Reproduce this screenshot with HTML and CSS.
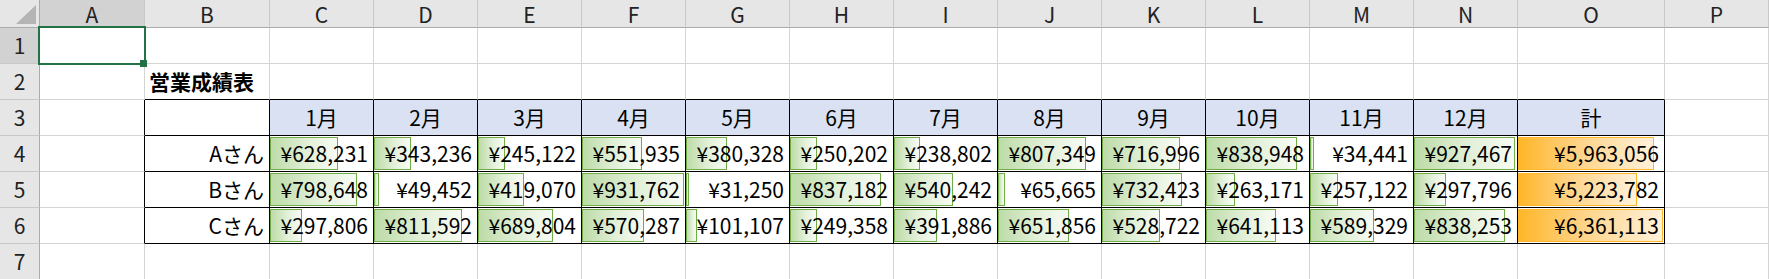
FILE: index.html
```html
<!DOCTYPE html>
<html lang="ja">
<head>
<meta charset="utf-8">
<title>営業成績表</title>
<link rel="stylesheet" href="styles.css">
</head>
<body>
<div class="sheet">
  <!-- column headers -->
  <div class="corner"><span class="tri"></span></div>
  <div class="ch sel">A</div><div class="ch">B</div><div class="ch">C</div><div class="ch">D</div><div class="ch">E</div><div class="ch">F</div><div class="ch">G</div><div class="ch">H</div><div class="ch">I</div><div class="ch">J</div><div class="ch">K</div><div class="ch">L</div><div class="ch">M</div><div class="ch">N</div><div class="ch">O</div><div class="ch">P</div>

  <!-- row 1 -->
  <div class="rh sel">1</div>
  <div class="c"></div><div class="c"></div><div class="c"></div><div class="c"></div><div class="c"></div><div class="c"></div><div class="c"></div><div class="c"></div><div class="c"></div><div class="c"></div><div class="c"></div><div class="c"></div><div class="c"></div><div class="c"></div><div class="c"></div><div class="c"></div>

  <!-- row 2 -->
  <div class="rh">2</div>
  <div class="c"></div>
  <div class="c bb title">営業成績表</div>
  <div class="c bb"></div><div class="c bb"></div><div class="c bb"></div><div class="c bb"></div><div class="c bb"></div><div class="c bb"></div><div class="c bb"></div><div class="c bb"></div><div class="c bb"></div><div class="c bb"></div><div class="c bb"></div><div class="c bb"></div><div class="c bb"></div>
  <div class="c"></div>

  <!-- row 3 -->
  <div class="rh">3</div>
  <div class="c br"></div>
  <div class="c t"></div>
  <div class="c t hd">1月</div><div class="c t hd">2月</div><div class="c t hd">3月</div><div class="c t hd">4月</div><div class="c t hd">5月</div><div class="c t hd">6月</div><div class="c t hd">7月</div><div class="c t hd">8月</div><div class="c t hd">9月</div><div class="c t hd">10月</div><div class="c t hd">11月</div><div class="c t hd">12月</div>
  <div class="c t hd">計</div>
  <div class="c"></div>

  <!-- row 4 -->
  <div class="rh">4</div>
  <div class="c br"></div>
  <div class="c t lbl">Aさん</div>
  <div class="c t num"><span class="bar g" style="width:68.4px"></span><span class="v">¥628,231</span></div>
  <div class="c t num"><span class="bar g" style="width:37.4px"></span><span class="v">¥343,236</span></div>
  <div class="c t num"><span class="bar g" style="width:26.7px"></span><span class="v">¥245,122</span></div>
  <div class="c t num"><span class="bar g" style="width:60.1px"></span><span class="v">¥551,935</span></div>
  <div class="c t num"><span class="bar g" style="width:41.4px"></span><span class="v">¥380,328</span></div>
  <div class="c t num"><span class="bar g" style="width:27.3px"></span><span class="v">¥250,202</span></div>
  <div class="c t num"><span class="bar g" style="width:26.0px"></span><span class="v">¥238,802</span></div>
  <div class="c t num"><span class="bar g" style="width:87.9px"></span><span class="v">¥807,349</span></div>
  <div class="c t num"><span class="bar g" style="width:78.1px"></span><span class="v">¥716,996</span></div>
  <div class="c t num"><span class="bar g" style="width:91.4px"></span><span class="v">¥838,948</span></div>
  <div class="c t num"><span class="bar g" style="width:3.8px"></span><span class="v">¥34,441</span></div>
  <div class="c t num"><span class="bar g" style="width:101.0px"></span><span class="v">¥927,467</span></div>
  <div class="c t num"><span class="bar o" style="width:135.9px"></span><span class="v">¥5,963,056</span></div>
  <div class="c"></div>

  <!-- row 5 -->
  <div class="rh">5</div>
  <div class="c br"></div>
  <div class="c t lbl">Bさん</div>
  <div class="c t num"><span class="bar g" style="width:87.0px"></span><span class="v">¥798,648</span></div>
  <div class="c t num"><span class="bar g" style="width:5.4px"></span><span class="v">¥49,452</span></div>
  <div class="c t num"><span class="bar g" style="width:45.7px"></span><span class="v">¥419,070</span></div>
  <div class="c t num"><span class="bar g" style="width:101.5px"></span><span class="v">¥931,762</span></div>
  <div class="c t num"><span class="bar g" style="width:3.4px"></span><span class="v">¥31,250</span></div>
  <div class="c t num"><span class="bar g" style="width:91.2px"></span><span class="v">¥837,182</span></div>
  <div class="c t num"><span class="bar g" style="width:58.9px"></span><span class="v">¥540,242</span></div>
  <div class="c t num"><span class="bar g" style="width:7.2px"></span><span class="v">¥65,665</span></div>
  <div class="c t num"><span class="bar g" style="width:79.8px"></span><span class="v">¥732,423</span></div>
  <div class="c t num"><span class="bar g" style="width:28.7px"></span><span class="v">¥263,171</span></div>
  <div class="c t num"><span class="bar g" style="width:28.0px"></span><span class="v">¥257,122</span></div>
  <div class="c t num"><span class="bar g" style="width:32.4px"></span><span class="v">¥297,796</span></div>
  <div class="c t num"><span class="bar o" style="width:119.1px"></span><span class="v">¥5,223,782</span></div>
  <div class="c"></div>

  <!-- row 6 -->
  <div class="rh">6</div>
  <div class="c br"></div>
  <div class="c t lbl">Cさん</div>
  <div class="c t num"><span class="bar g" style="width:32.4px"></span><span class="v">¥297,806</span></div>
  <div class="c t num"><span class="bar g" style="width:88.4px"></span><span class="v">¥811,592</span></div>
  <div class="c t num"><span class="bar g" style="width:75.1px"></span><span class="v">¥689,804</span></div>
  <div class="c t num"><span class="bar g" style="width:62.1px"></span><span class="v">¥570,287</span></div>
  <div class="c t num"><span class="bar g" style="width:11.0px"></span><span class="v">¥101,107</span></div>
  <div class="c t num"><span class="bar g" style="width:27.2px"></span><span class="v">¥249,358</span></div>
  <div class="c t num"><span class="bar g" style="width:42.7px"></span><span class="v">¥391,886</span></div>
  <div class="c t num"><span class="bar g" style="width:71.0px"></span><span class="v">¥651,856</span></div>
  <div class="c t num"><span class="bar g" style="width:57.6px"></span><span class="v">¥528,722</span></div>
  <div class="c t num"><span class="bar g" style="width:69.8px"></span><span class="v">¥641,113</span></div>
  <div class="c t num"><span class="bar g" style="width:64.2px"></span><span class="v">¥589,329</span></div>
  <div class="c t num"><span class="bar g" style="width:91.3px"></span><span class="v">¥838,253</span></div>
  <div class="c t num"><span class="bar o" style="width:145px"></span><span class="v">¥6,361,113</span></div>
  <div class="c"></div>

  <!-- row 7 -->
  <div class="rh">7</div>
  <div class="c"></div><div class="c"></div><div class="c"></div><div class="c"></div><div class="c"></div><div class="c"></div><div class="c"></div><div class="c"></div><div class="c"></div><div class="c"></div><div class="c"></div><div class="c"></div><div class="c"></div><div class="c"></div><div class="c"></div><div class="c"></div>

  <!-- active cell selection -->
  <div class="selection"><span class="handle"></span></div>
</div>
</body>
</html>
```

FILE: styles.css
```css
* {
  box-sizing: border-box;
}

html, body {
  margin: 0;
  padding: 0;
  background: #ffffff;
  overflow: hidden;
}

.sheet {
  position: relative;
  display: grid;
  grid-template-columns: 40px 105px 125px repeat(12, 104px) 147px 104px;
  grid-template-rows: 28px repeat(7, 36px);
  font-family: "Noto Sans CJK JP", "Noto Sans", sans-serif;
  font-size: 21px;
  color: #000000;
  width: 1769px;
  height: 279px;
}

.corner {
  position: relative;
  background: #e6e6e6;
  border-right: 1px solid #ababab;
  border-bottom: 1px solid #ababab;
}

.tri {
  position: absolute;
  right: 3px;
  bottom: 3px;
  width: 0;
  height: 0;
  border-left: 20px solid transparent;
  border-bottom: 19px solid #b4b4b4;
}

.ch {
  display: flex;
  align-items: center;
  justify-content: center;
  background: #e6e6e6;
  border-right: 1px solid #c8c8c8;
  border-bottom: 1px solid #ababab;
  color: #222222;
  font-size: 21px;
  line-height: 1;
  padding-top: 1px;
}

.rh {
  display: flex;
  align-items: center;
  justify-content: center;
  background: #e6e6e6;
  border-right: 1px solid #ababab;
  border-bottom: 1px solid #c8c8c8;
  color: #222222;
  font-size: 21px;
  line-height: 1;
}

.ch.sel,
.rh.sel {
  background: #d2d2d2;
}

.c {
  position: relative;
  display: flex;
  align-items: center;
  border-right: 1px solid #d4d4d4;
  border-bottom: 1px solid #d4d4d4;
  line-height: 1;
  white-space: nowrap;
}

.c.br {
  border-right-color: #000000;
}

.c.bb {
  border-bottom-color: #000000;
}

.c.t {
  border-right-color: #000000;
  border-bottom-color: #000000;
}

.title {
  font-weight: 700;
  padding-left: 4px;
}

.hd {
  justify-content: center;
  background: #d9e1f2;
}

.lbl {
  justify-content: flex-end;
  padding-right: 5px;
}

.num {
  justify-content: flex-end;
  padding-right: 5px;
}

.v {
  position: relative;
}

.bar {
  position: absolute;
  left: 0;
  top: 1px;
  bottom: 1px;
}

.bar.g {
  border: 1px solid #70ad47;
  background: linear-gradient(to right, #bddba8 0%, #e2f0d8 55%, #f7fbf4 100%);
}

.bar.o {
  border: 1px solid #ffb628;
  background: linear-gradient(to right, #ffb628 0%, #ffd489 45%, #fff1da 100%);
}

.selection {
  position: absolute;
  left: 38px;
  top: 26px;
  width: 108px;
  height: 39px;
  border: 2px solid #217346;
  pointer-events: none;
}

.handle {
  position: absolute;
  right: -3px;
  bottom: -4px;
  width: 7px;
  height: 7px;
  background: #217346;
}
```
